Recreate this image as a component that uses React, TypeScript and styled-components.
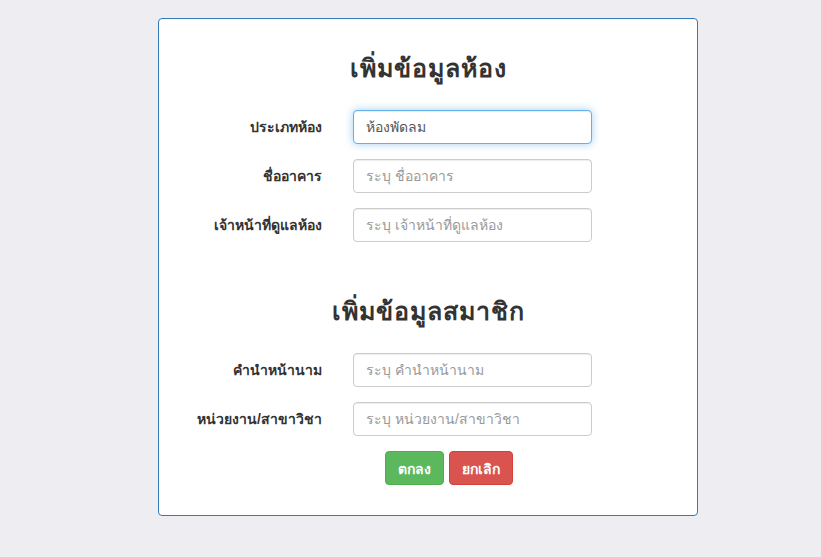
import styled, { createGlobalStyle } from 'styled-components';

const GlobalStyle = createGlobalStyle`
    html, body {
        margin: 0;
        padding: 0;
        background: #eeedf2;
        font-family: "Liberation Sans", Arial, sans-serif;
        font-size: 14px;
        color: #333;
    }
`;

const Page = styled.div`
    padding: 18px 0 40px 158px;
`;

const Panel = styled.form`
    box-sizing: border-box;
    width: 540px;
    padding: 29px 0 30px;
    background: #fff;
    border: 1px solid #337ab7;
    border-radius: 4px;
`;

const Title = styled.h3<{ $first?: boolean }>`
    margin: ${p => (p.$first ? '0 0 22px' : '49px 0 22px')};
    height: 40px;
    line-height: 40px;
    font-size: 25px;
    letter-spacing: 1px;
    font-weight: bold;
    text-align: center;
    color: #333;
`;

const Row = styled.div`
    display: grid;
    grid-template-columns: 163px 239px;
    column-gap: 31px;
    align-items: center;

    & + & {
        margin-top: 15px;
    }
`;

const Label = styled.label`
    text-align: right;
    font-weight: bold;
    line-height: 20px;
`;

const Input = styled.input<{ $focus?: boolean }>`
    box-sizing: border-box;
    width: 100%;
    height: 34px;
    padding: 6px 12px;
    font: inherit;
    font-size: 14px;
    color: #555;
    background: #fff;
    border: 1px solid ${p => (p.$focus ? '#66afe9' : '#ccc')};
    border-radius: 4px;
    outline: none;
    box-shadow: inset 0 1px 1px rgba(0, 0, 0, 0.075)${p => (p.$focus ? ', 0 0 8px rgba(102, 175, 233, 0.6)' : '')};

    &::placeholder {
        color: #999;
    }
`;

const Actions = styled.div`
    display: flex;
    justify-content: center;
    gap: 5px;
    margin-top: 15px;
    padding-left: 42px;
`;

const Button = styled.button<{ $variant: 'success' | 'danger' }>`
    height: 34px;
    padding: 6px 12px;
    font: inherit;
    font-size: 14px;
    font-weight: bold;
    color: #fff;
    border-radius: 4px;
    cursor: pointer;
    background: ${p => (p.$variant === 'success' ? '#5cb85c' : '#d9534f')};
    border: 1px solid ${p => (p.$variant === 'success' ? '#4cae4c' : '#d43f3a')};
`;

const roomFields = [
    { label: 'ประเภทห้อง', placeholder: '', value: 'ห้องพัดลม', focus: true },
    { label: 'ชื่ออาคาร', placeholder: 'ระบุ ชื่ออาคาร' },
    { label: 'เจ้าหน้าที่ดูแลห้อง', placeholder: 'ระบุ เจ้าหน้าที่ดูแลห้อง' },
];

const memberFields = [
    { label: 'คำนำหน้านาม', placeholder: 'ระบุ คำนำหน้านาม' },
    { label: 'หน่วยงาน/สาขาวิชา', placeholder: 'ระบุ หน่วยงาน/สาขาวิชา' },
];

type Field = { label: string; placeholder: string; value?: string; focus?: boolean };

const Fields = ({ items }: { items: Field[] }) => (
    <div>
        {items.map(f => (
            <Row key={f.label}>
                <Label>{f.label}</Label>
                <Input
                    placeholder={f.placeholder}
                    defaultValue={f.value}
                    $focus={f.focus}
                />
            </Row>
        ))}
    </div>
);

export default function App() {
    return (
        <Page>
            <GlobalStyle />
            <Panel onSubmit={e => e.preventDefault()}>
                <Title $first>เพิ่มข้อมูลห้อง</Title>
                <Fields items={roomFields} />

                <Title>เพิ่มข้อมูลสมาชิก</Title>
                <Fields items={memberFields} />

                <Actions>
                    <Button type="submit" $variant="success">ตกลง</Button>
                    <Button type="button" $variant="danger">ยกเลิก</Button>
                </Actions>
            </Panel>
        </Page>
    );
}
